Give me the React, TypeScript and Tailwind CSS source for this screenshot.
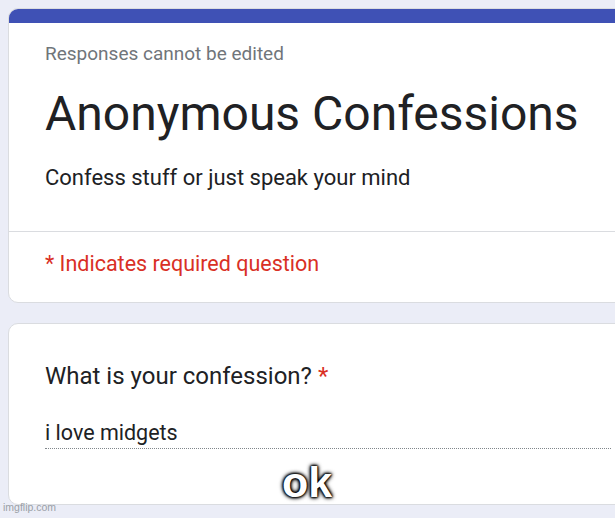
import React from 'react';

const font = { fontFamily: 'Roboto, "Noto Sans", sans-serif' };

const App = () => {
  return (
    <div className="relative h-[518px] w-[615px] overflow-hidden bg-[#ebedf7] pl-2 pt-2" style={font}>
      <div className="w-[640px] overflow-hidden rounded-[10px] border border-[#dadce0] bg-white">
        <div className="h-[14px] bg-[#3f51b5]" />
        <div className="px-9 pb-[39px] pt-[19px]">
          <p className="text-[19px] leading-[24px] text-[#70757a]">Responses cannot be edited</p>
          <h1 className="mt-[20px] text-[48px] leading-[56px] text-[#202124]">Anonymous Confessions</h1>
          <p className="mt-[22px] text-[22px] leading-[28px] text-[#202124]">
            Confess stuff or just speak your mind
          </p>
        </div>
        <div className="border-t border-[#dadce0] px-9 pb-[24px] pt-[18px]">
          <p className="text-[21.5px] leading-[28px] text-[#d93025]">* Indicates required question</p>
        </div>
      </div>

      <div className="mt-[20px] h-[182px] w-[640px] rounded-[10px] border border-[#dadce0] bg-white px-9 pt-[37px]">
        <p className="text-[24px] leading-[30px] text-[#202124]">
          What is your confession? <span className="text-[#d93025]">*</span>
        </p>
        <div className="mt-[28px] border-b border-dotted border-[#80868b] pb-[1px]">
          <p className="text-[21.5px] leading-[28px] text-[#202124]">i love midgets</p>
        </div>
      </div>

      <span
        className="absolute left-[282px] top-[456px] text-[43px] font-bold leading-[52px] text-white [text-shadow:0_0_2px_#000,0_0_2px_#000,0_0_3px_#000,0_0_4px_#000,0_0_5px_#000]"
        style={{ fontFamily: '"Liberation Sans", Arial, sans-serif' }}
      >
        ok
      </span>
      <span
        className="absolute bottom-[2px] left-[3px] text-[10.5px] text-[#9aa0a6]"
        style={{ fontFamily: '"Liberation Sans", Arial, sans-serif' }}
      >
        imgflip.com
      </span>
    </div>
  );
};

export default App;
